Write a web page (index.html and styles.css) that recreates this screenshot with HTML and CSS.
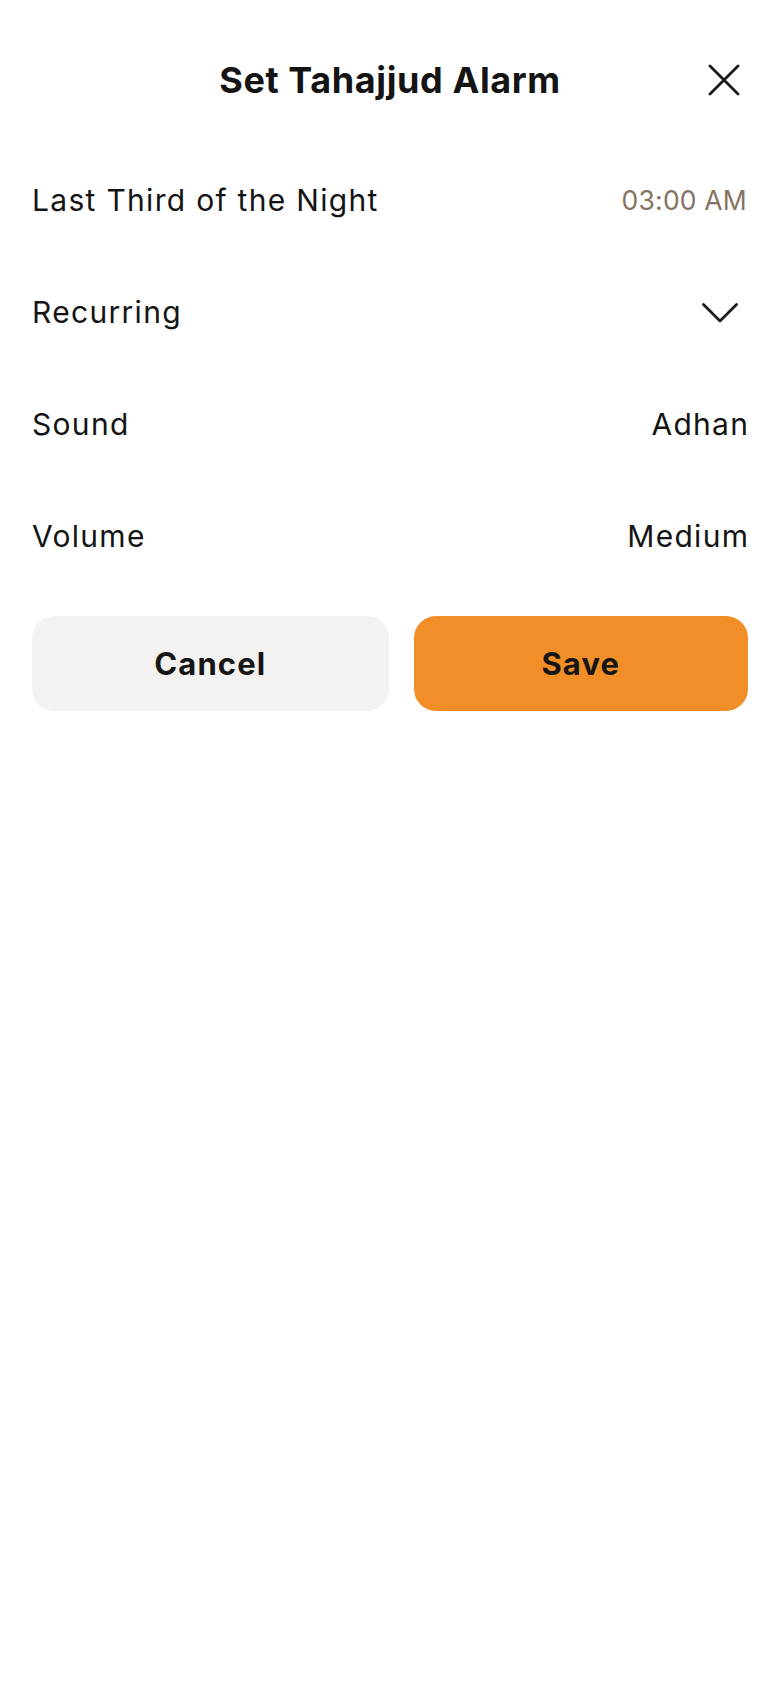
FILE: index.html
```html
<!DOCTYPE html>
<html lang="en">
<head>
<meta charset="utf-8">
<title>Set Tahajjud Alarm</title>
<link rel="stylesheet" href="styles.css">
</head>
<body>
<main class="sheet">
  <header class="sheet-header">
    <span class="spacer"></span>
    <h1 class="title">Set Tahajjud Alarm</h1>
    <button class="close" aria-label="Close">
      <svg width="32" height="32" viewBox="0 0 32 32" fill="none" stroke="#1a1a1a" stroke-width="2.8" stroke-linecap="round"><path d="M2 2 L30 30 M30 2 L2 30"/></svg>
    </button>
  </header>
  <ul class="rows">
    <li class="row"><span class="label">Last Third of the Night</span><span class="value time">03:00 AM</span></li>
    <li class="row"><span class="label">Recurring</span>
      <svg class="chevron" width="36" height="20" viewBox="0 0 36 20" fill="none" stroke="#1a1a1a" stroke-width="2.8" stroke-linecap="round" stroke-linejoin="round"><path d="M1.5 1.5 L18 18 L34.5 1.5"/></svg>
    </li>
    <li class="row"><span class="label">Sound</span><span class="value">Adhan</span></li>
    <li class="row"><span class="label">Volume</span><span class="value">Medium</span></li>
  </ul>
  <div class="actions">
    <button class="btn btn-cancel">Cancel</button>
    <button class="btn btn-save">Save</button>
  </div>
</main>
</body>
</html>
```
FILE: styles.css
```css
html, body {
  margin: 0;
  padding: 0;
  background: #ffffff;
}
body {
  font-family: "Inter", "Noto Sans", sans-serif;
  color: #141414;
}
.sheet {
  padding: 48px 32px 0 32px;
}
.sheet-header {
  display: grid;
  grid-template-columns: 1fr auto 1fr;
  align-items: center;
  height: 64px;
}
.title {
  margin: 0;
  font-size: 36px;
  font-weight: 700;
  letter-spacing: 0.6px;
  white-space: nowrap;
}
.close {
  justify-self: end;
  margin-right: 8px;
  width: 32px;
  height: 32px;
  padding: 0;
  border: 0;
  background: none;
  display: flex;
}
.rows {
  list-style: none;
  margin: 32px 0 0 0;
  padding: 0;
}
.row {
  height: 112px;
  display: flex;
  align-items: center;
  justify-content: space-between;
  font-size: 30px;
  letter-spacing: 1.3px;
}
.value {
  margin-right: -1.3px;
}
.value.time {
  font-size: 26.5px;
  letter-spacing: 0.2px;
  margin-right: 1px;
  color: #847362;
}
.chevron {
  margin-right: 10px;
  margin-top: 2px;
}
.actions {
  display: flex;
  gap: 25px;
  margin-top: 24px;
}
.btn {
  height: 95px;
  border: 0;
  border-radius: 22px;
  font-family: inherit;
  font-size: 31px;
  font-weight: 700;
  letter-spacing: 1.1px;
  color: #161616;
}
.btn-cancel {
  flex: 357 1 0;
  background: #f3f2f0;
}
.btn-save {
  flex: 334 1 0;
  background: #f28e27;
}
```
